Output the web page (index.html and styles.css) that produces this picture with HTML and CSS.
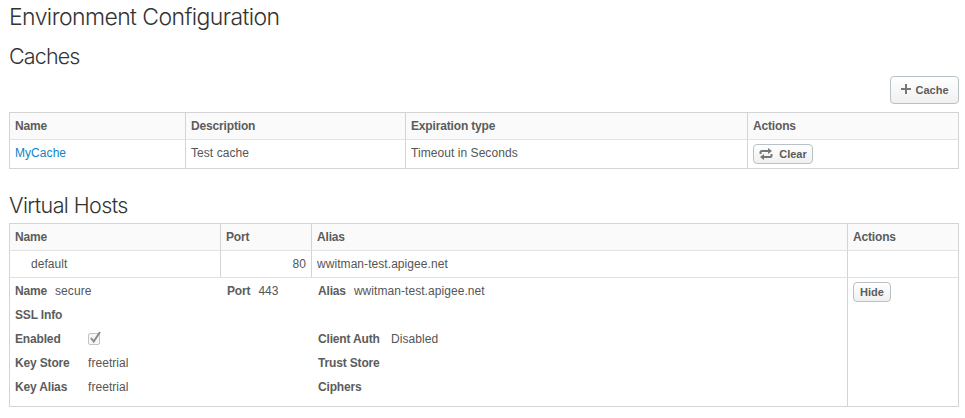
FILE: index.html
```html
<!DOCTYPE html>
<html lang="en">
<head>
<meta charset="utf-8">
<title>Environment Configuration</title>
<link rel="stylesheet" href="styles.css">
</head>
<body>
<main>
  <h1><span>Environment Configuration</span></h1>
  <h2 class="caches-title"><span>Caches</span></h2>
  <div class="toolbar">
    <button class="btn btn-large" type="button"><svg class="plus" width="10" height="10" viewBox="0 0 10 10"><path d="M0 5H10M5 0V10" stroke="#777" stroke-width="2"/></svg><span>Cache</span></button>
  </div>
  <table class="caches">
    <colgroup><col class="c-name"><col class="c-desc"><col class="c-exp"><col></colgroup>
    <thead><tr><th><span>Name</span></th><th><span>Description</span></th><th><span>Expiration type</span></th><th><span>Actions</span></th></tr></thead>
    <tbody><tr>
      <td><a href="#"><span>MyCache</span></a></td><td><span>Test cache</span></td><td><span>Timeout in Seconds</span></td>
      <td class="action"><button class="btn btn-clear" type="button"><svg width="14" height="12" viewBox="0 0 14 12"><path d="M1.5 6V4.5Q1.5 3 3 3H10M12.5 6V7.5Q12.5 9 11 9H4" fill="none" stroke="#777" stroke-width="2"/><path d="M9 0L13 3L9 6ZM5 6L1 9L5 12Z" fill="#777"/></svg><span>Clear</span></button></td>
    </tr></tbody>
  </table>
  <h2 class="hosts-title"><span>Virtual Hosts</span></h2>
  <table class="hosts">
    <colgroup><col class="h-name"><col class="h-port"><col class="h-alias"><col></colgroup>
    <thead><tr><th><span>Name</span></th><th><span>Port</span></th><th><span>Alias</span></th><th><span>Actions</span></th></tr></thead>
    <tbody>
      <tr><td class="indent"><span>default</span></td><td class="num"><span>80</span></td><td><span>wwitman-test.apigee.net</span></td><td></td></tr>
      <tr class="open">
        <td colspan="3">
          <div class="details">
            <div class="pair"><b>Name</b><span>secure</span></div>
            <div class="pair"><b>Port</b><span>443</span></div>
            <div class="pair"><b>Alias</b><span>wwitman-test.apigee.net</span></div>
            <div class="wide"><b>SSL Info</b></div>
            <div class="field"><b>Enabled</b><svg width="14" height="15" viewBox="0 0 14 15"><rect x=".5" y="3.5" width="11" height="11" rx="1.5" fill="#f7f7f7" stroke="#c4c4c4"/><path d="M3 8L5.7 11.5L12 2" fill="none" stroke="#8c8c8c" stroke-width="2"/></svg></div>
            <div class="field"><b>Client Auth</b><span>Disabled</span></div>
            <div class="field"><b>Key Store</b><span>freetrial</span></div>
            <div class="field"><b>Trust Store</b></div>
            <div class="field"><b>Key Alias</b><span>freetrial</span></div>
            <div class="field"><b>Ciphers</b></div>
          </div>
        </td>
        <td class="action"><button class="btn btn-hide" type="button"><span>Hide</span></button></td>
      </tr>
    </tbody>
  </table>
</main>
</body>
</html>
```
FILE: styles.css
```css
* { box-sizing: border-box; }
body {
  margin: 0;
  background: #fff;
  color: #555;
  font: 12px/18px "Liberation Sans", Arial, sans-serif;
  letter-spacing: .06px;
}
main { width: 950px; margin-left: 9px; }
h1, h2 {
  margin: 0;
  color: #333;
  font-family: Inter, "Liberation Sans", sans-serif;
  font-weight: 300;
  white-space: nowrap;
}
h1 { padding-top: 2px; font-size: 23px; line-height: 30px; letter-spacing: -.59px; }
h2 { font-size: 21.5px; line-height: 30px; letter-spacing: -.6px; }
.caches-title { margin-top: 9px; letter-spacing: -.85px; }
.hosts-title { margin: 21px 0 3px; }
.toolbar { display: flex; justify-content: flex-end; margin: 5px 0 8px; }
table {
  width: 950px;
  table-layout: fixed;
  border-collapse: separate;
  border-spacing: 0;
  border: solid #d4d4d4;
  border-width: 0 1px 1px 0;
}
th, td {
  height: 27px;
  padding: 4px 5px;
  border-top: 1px solid #e2e2e2;
  border-left: 1px solid #d4d4d4;
  text-align: left;
  vertical-align: top;
  white-space: nowrap;
}
th { background: #fafafa; border-top-color: #d4d4d4; }
th, b { color: #5c5c5c; font-weight: bold; letter-spacing: -.16px; }
a { color: #0f84c6; text-decoration: none; }
.caches td { height: 29px; }
.c-name { width: 176px; }
.c-desc { width: 220px; }
.c-exp { width: 342px; }
.h-name { width: 211px; }
.h-port { width: 91px; }
.h-alias { width: 536px; }
td.indent { padding-left: 21px; }
td.num { text-align: right; }
td.action { padding-top: 4px; padding-bottom: 0; }
.open td { height: 129px; }
.btn {
  display: flex;
  align-items: center;
  justify-content: center;
  height: 20px;
  padding: 0;
  border: 1px solid #b8c2c6;
  border-radius: 4px;
  background: linear-gradient(#fff, #f0f0f0);
  color: #5c5c5c;
  font: bold 11px/16px "Liberation Sans", Arial, sans-serif;
}
.btn-large { width: 69px; height: 28px; padding-left: 1px; gap: 4px; }
.plus { margin-bottom: 2px; }
.btn-clear { width: 60px; gap: 6px; }
.btn-hide { width: 38px; }
.details {
  display: grid;
  grid-template-columns: 212px 91px 1fr;
  grid-auto-rows: 24px;
}
.pair { display: flex; gap: 8px; }
.wide { grid-column: 1 / -1; }
.field { display: grid; grid-template-columns: 73px 1fr; }
.field:nth-child(odd) { grid-column: 1 / 3; }
.field:nth-child(even) { grid-column: 3; }
```
